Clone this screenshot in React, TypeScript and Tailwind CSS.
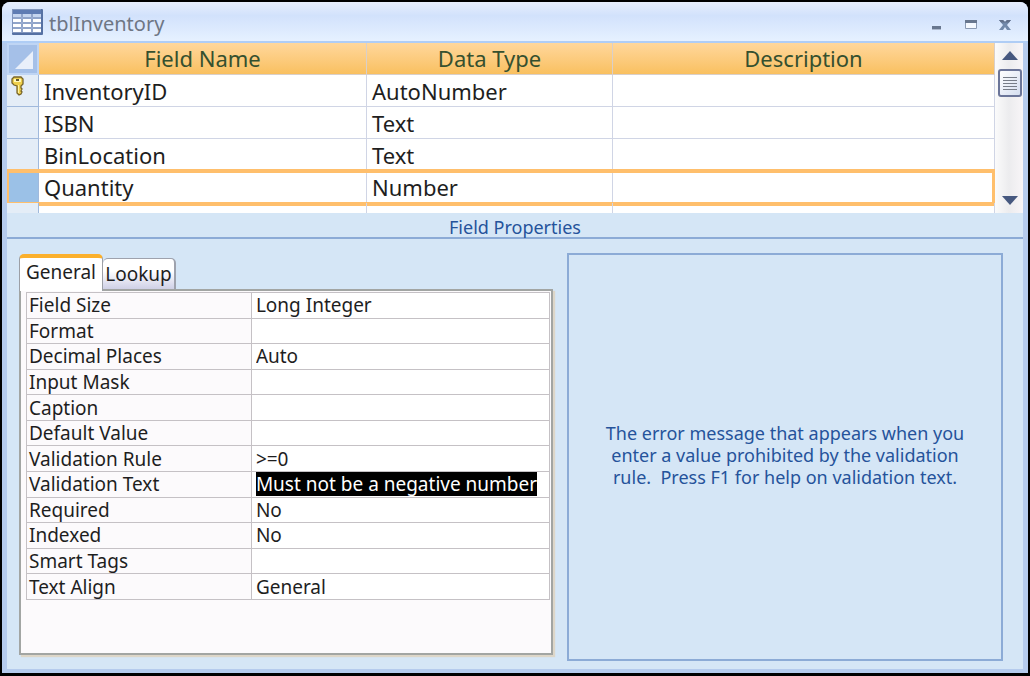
import React, { useState } from 'react'

const fields = [
  { name: 'InventoryID', type: 'AutoNumber', isKey: true },
  { name: 'ISBN', type: 'Text' },
  { name: 'BinLocation', type: 'Text' },
  { name: 'Quantity', type: 'Number', selected: true },
  { name: '', type: '' },
]

const initialProps = [
  { id: 'field-size', label: 'Field Size', value: 'Long Integer' },
  { id: 'format', label: 'Format', value: '' },
  { id: 'decimal-places', label: 'Decimal Places', value: 'Auto' },
  { id: 'input-mask', label: 'Input Mask', value: '' },
  { id: 'caption', label: 'Caption', value: '' },
  { id: 'default-value', label: 'Default Value', value: '' },
  { id: 'validation-rule', label: 'Validation Rule', value: '>=0' },
  { id: 'validation-text', label: 'Validation Text', value: 'Must not be a negative number' },
  { id: 'required', label: 'Required', value: 'No' },
  { id: 'indexed', label: 'Indexed', value: 'No' },
  { id: 'smart-tags', label: 'Smart Tags', value: '' },
  { id: 'text-align', label: 'Text Align', value: 'General' },
]

const TableIcon = () => (
  <svg width="31" height="26" viewBox="0 0 31 26" aria-hidden="true">
    <rect x="0" y="0" width="31" height="26" rx="1" fill="#5671a3" />
    <rect x="0" y="0" width="29" height="24" fill="#8296bd" />
    <rect x="1" y="1" width="28" height="4" fill="#5f7cb3" />
    <path d="M1 5h8v3H1zM11 5h8v3h-8zM21 5h8v3h-8z" fill="#c5d5ef" />
    <path d="M1 10h8v3H1zM11 10h8v3h-8zM21 10h8v3h-8zM1 15h8v3H1zM11 15h8v3h-8zM21 15h8v3h-8zM1 20h8v3H1zM11 20h8v3h-8zM21 20h8v3h-8z" fill="#fff" />
    <path d="M1 9h28M1 14h28M1 19h28M10 5v18M20 5v18" stroke="#9eb2d6" />
  </svg>
)

const KeyIcon = () => (
  <svg width="14" height="20" viewBox="0 0 14 20" aria-label="Primary key" role="img">
    <path
      d="M3 1h7l2 2v5l-2 2v2l1 1-1 2 1 1-1 2-2 1-2-2v-7L3 9 1 7V3z"
      fill="#efd04c"
      stroke="#77652c"
      strokeWidth="1.3"
    />
    <path d="M3 3h7v3H3z" fill="#fff7b8" />
    <path d="M5 3h3v2H5z" fill="#66592d" />
    <path d="M7.5 9v8" stroke="#fff3a0" />
  </svg>
)

const TitleBar = () => (
  <header className="flex h-[41px] shrink-0 items-center justify-between border-b-2 border-[#afcdf5] bg-linear-to-b from-[#e7eefd] from-0% via-[#d2e2fc] via-35% to-[#e6f1ff] pr-[14px] pl-[10px]">
    <div className="flex items-center gap-[6px]">
      <TableIcon />
      <h1 className="pt-1 text-[20px] leading-[28px] text-[#6e7684]">tblInventory</h1>
    </div>
    <div className="flex items-center gap-4 pt-2">
      <button type="button" aria-label="Minimize" className="flex h-4 w-[18px] items-center justify-center">
        <svg width="10" height="12" viewBox="0 0 10 12">
          <path d="M0 6h9v3H0z" fill="#68778f" />
          <path d="M0 9h9v1H0z" fill="#aebace" />
        </svg>
      </button>
      <button type="button" aria-label="Restore" className="flex h-4 w-[18px] items-center justify-center">
        <svg width="12" height="12" viewBox="0 0 12 12">
          <path d="M.5 1h11v7.500H.5z" fill="#f5f9ff" stroke="#8a9ab3" />
          <path d="M0 0h12v3H0z" fill="#68778f" />
        </svg>
      </button>
      <button type="button" aria-label="Close" className="flex h-4 w-[18px] items-center justify-center">
        <svg width="12" height="12" viewBox="0 0 12 12">
          <path d="M0 0h4l2 2 2-2h4L8 5l4 5H8L6 7l-2 3H0l4-5z" fill="#7189aa" />
          <path d="M0 0h4l2 2 2-2h4l-2 2.500H2z" fill="#61708a" />
        </svg>
      </button>
    </div>
  </header>
)

const FieldGrid = () => (
  <div className="flex h-[170px] shrink-0 overflow-hidden bg-white">
    <div className="min-w-0 flex-1">
      <table className="w-full table-fixed border-separate border-spacing-0 text-left text-[22px] leading-[28px] text-[#1e1e1e]">
        <colgroup>
          <col className="w-[32px]" />
          <col className="w-[33.2%]" />
          <col className="w-[24.9%]" />
          <col />
        </colgroup>
        <thead>
          <tr className="h-[32px] text-[#35502f]">
            <th className="border-2 border-[#bfd5f4] bg-[#a5c0e8] p-0">
              <button type="button" aria-label="Select all fields" className="flex h-[27px] w-full items-end justify-end pr-1 pb-1">
                <svg width="18" height="18" viewBox="0 0 18 18">
                  <path d="M18 0v18H0z" fill="#e9effa" />
                </svg>
              </button>
            </th>
            <th className="border-r border-b border-[#d9cfc9] bg-linear-to-b from-[#ffd79b] to-[#f9c05f] p-0 pb-[2px] text-center font-normal">Field Name</th>
            <th className="border-r border-b border-[#d9cfc9] bg-linear-to-b from-[#ffd79b] to-[#f9c05f] p-0 pb-[2px] text-center font-normal">Data Type</th>
            <th className="border-r border-b border-[#d9cfc9] bg-linear-to-b from-[#ffd79b] to-[#f9c05f] p-0 pb-[2px] text-center font-normal">Description</th>
          </tr>
        </thead>
        <tbody>
          {fields.map((field, i) => (
            <tr key={i} className="relative h-[32px]">
              <td className={`border-r border-b border-[#a0b9dc] p-0 align-top ${field.selected ? 'bg-[#9bc1e7]' : 'bg-[#e4edf7]'}`}>
                {field.isKey && <div className="pt-px pl-1"><KeyIcon /></div>}
                {field.selected && (
                  <div className="pointer-events-none absolute inset-x-0 -top-[2px] -bottom-[3px] border-y-4 border-r-[3px] border-l-2 border-[#ffbf6c]" />
                )}
              </td>
              <td className="border-r border-b border-[#d0d5e5] p-0 pl-[5px]">{field.name}</td>
              <td className="border-r border-b border-[#d0d5e5] p-0 pl-[5px]">{field.type}</td>
              <td className="border-r border-b border-[#d0d5e5] p-0"></td>
            </tr>
          ))}
        </tbody>
      </table>
    </div>

    {/* Scrollbar */}
    <div className="flex w-[28px] flex-col items-center bg-linear-to-r from-[#fbfbfb] via-[#ececee] to-[#f8f5f8] py-2 pl-px">
      <button type="button" aria-label="Scroll up">
        <svg width="16" height="10" viewBox="0 0 16 10">
          <path d="M8 0l8 9H0z" fill="#46587f" />
        </svg>
      </button>
      <button
        type="button"
        aria-label="Scroll position"
        className="mt-2 flex h-[28px] w-[24px] flex-col items-center justify-center gap-[2px] rounded-[3px] border-2 border-[#6b7599] bg-linear-to-br from-white to-[#d5def0]"
      >
        <span className="h-px w-[14px] bg-[#777d88]" />
        <span className="h-px w-[14px] bg-[#777d88]" />
        <span className="h-px w-[14px] bg-[#777d88]" />
        <span className="h-px w-[14px] bg-[#777d88]" />
        <span className="h-px w-[14px] bg-[#777d88]" />
      </button>
      <button type="button" aria-label="Scroll down" className="mt-auto">
        <svg width="16" height="10" viewBox="0 0 16 10">
          <path d="M0 1h16l-8 9z" fill="#46587f" />
        </svg>
      </button>
    </div>
  </div>
)

const PropertySheet = () => {
  const [tab, setTab] = useState('general')
  const [props, setProps] = useState(initialProps)

  const updateProp = (id: string, value: string) => {
    setProps(props.map((p) => (p.id === id ? { ...p, value } : p)))
  }

  return (
    <section className="flex min-w-0 flex-col text-[19px] leading-[24px] text-[#1e1e1e]">
      {/* Tabs */}
      <div role="tablist" className="z-10 flex items-end">
        <button
          type="button"
          role="tab"
          aria-selected={tab === 'general'}
          onClick={() => setTab('general')}
          className="-mb-[2px] h-[37px] w-[84px] rounded-t-[5px] border-x border-t-4 border-x-[#9c9fa6] border-t-[#fbb02c] bg-white pb-[6px]"
        >
          General
        </button>
        <button
          type="button"
          role="tab"
          aria-selected={tab === 'lookup'}
          onClick={() => setTab('lookup')}
          className="h-[31px] w-[73px] rounded-t-[5px] border-t border-r-2 border-[#9ea2ad] bg-linear-to-b from-white from-40% to-[#cfd0e6]"
        >
          Lookup
        </button>
      </div>

      <div role="tabpanel" className="flex-1 border-2 border-[#a2a5a3] bg-[#fcfafc] shadow-[2px_2px_1px_#ddd6c8]">
        {tab === 'general' && (
          <div className="pt-px pr-px pl-[5px]">
            <table className="h-[308px] w-full table-fixed border-collapse">
              <colgroup>
                <col className="w-[43%]" />
                <col />
              </colgroup>
              <tbody>
                {props.map((p) => (
                  <tr key={p.id}>
                    <th className="border border-[#c5c1c5] p-0 pl-[2px] text-left font-normal">
                      <label htmlFor={p.id} className="block">{p.label}</label>
                    </th>
                    <td className="border border-[#c5c1c5] bg-white p-0 pl-[4px]">
                      <input
                        id={p.id}
                        type="text"
                        value={p.value}
                        onChange={(e) => updateProp(p.id, e.target.value)}
                        className={`block h-[24px] outline-none ${p.id === 'validation-text' ? 'field-sizing-content bg-black text-white' : 'w-full'}`}
                      />
                    </td>
                  </tr>
                ))}
              </tbody>
            </table>
          </div>
        )}
      </div>
    </section>
  )
}

const App = () => {
  return (
    <div className="h-screen bg-black px-[2px] pt-[2px] pb-[3px] font-['Noto_Sans','Open_Sans',sans-serif]">
      <div className="flex h-full flex-col overflow-hidden rounded-t-[8px] bg-[#b5cbed]">
        <TitleBar />
        <main className="mx-[5px] mb-[4px] flex flex-1 flex-col bg-[#d5e6f6]">
          <FieldGrid />
          <h2 className="h-[26px] border-b-2 border-[#8cabd6] text-center text-[18px] leading-[28px] text-[#25539b]">Field Properties</h2>
          <div className="grid flex-1 grid-cols-[534fr_436fr] gap-[14px] pt-[14px] pr-[20px] pb-[8px] pl-[12px]">
            <div className="flex flex-col pt-px pb-[6px] *:flex-1">
              <PropertySheet />
            </div>
            <aside className="flex items-center justify-center border-2 border-[#8cabd6] px-6 pb-1 text-center text-[18px] leading-[22px] text-[#25539b]">
              <p>
                The error message that appears when you
                <br />
                enter a value prohibited by the validation
                <br />
                rule.&nbsp; Press F1 for help on validation text.
              </p>
            </aside>
          </div>
        </main>
      </div>
    </div>
  )
}

export default App
